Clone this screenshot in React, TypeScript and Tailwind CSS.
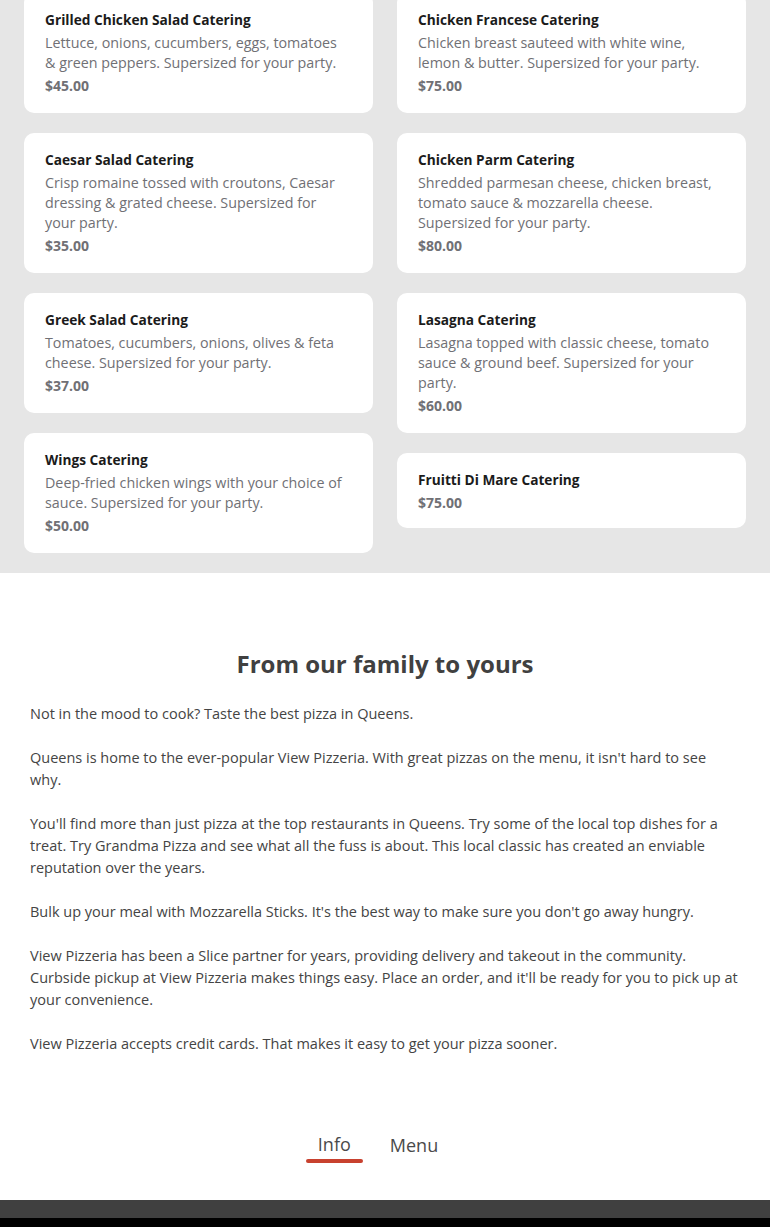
const left = [
  {
    name: "Grilled Chicken Salad Catering",
    description: "Lettuce, onions, cucumbers, eggs, tomatoes & green peppers. Supersized for your party.",
    price: "$45.00",
  },
  {
    name: "Caesar Salad Catering",
    description: "Crisp romaine tossed with croutons, Caesar dressing & grated cheese. Supersized for your party.",
    price: "$35.00",
  },
  {
    name: "Greek Salad Catering",
    description: "Tomatoes, cucumbers, onions, olives & feta cheese. Supersized for your party.",
    price: "$37.00",
  },
  {
    name: "Wings Catering",
    description: "Deep-fried chicken wings with your choice of sauce. Supersized for your party.",
    price: "$50.00",
  },
];

const right = [
  {
    name: "Chicken Francese Catering",
    description: "Chicken breast sauteed with white wine, lemon & butter. Supersized for your party.",
    price: "$75.00",
  },
  {
    name: "Chicken Parm Catering",
    description: "Shredded parmesan cheese, chicken breast, tomato sauce & mozzarella cheese. Supersized for your party.",
    price: "$80.00",
  },
  {
    name: "Lasagna Catering",
    description: "Lasagna topped with classic cheese, tomato sauce & ground beef. Supersized for your party.",
    price: "$60.00",
  },
  {
    name: "Fruitti Di Mare Catering",
    description: "",
    price: "$75.00",
  },
];

const paragraphs = [
  "Not in the mood to cook? Taste the best pizza in Queens.",
  "Queens is home to the ever-popular View Pizzeria. With great pizzas on the menu, it isn't hard to see why.",
  "You'll find more than just pizza at the top restaurants in Queens. Try some of the local top dishes for a treat. Try Grandma Pizza and see what all the fuss is about. This local classic has created an enviable reputation over the years.",
  "Bulk up your meal with Mozzarella Sticks. It's the best way to make sure you don't go away hungry.",
  "View Pizzeria has been a Slice partner for years, providing delivery and takeout in the community. Curbside pickup at View Pizzeria makes things easy. Place an order, and it'll be ready for you to pick up at your convenience.",
  "View Pizzeria accepts credit cards. That makes it easy to get your pizza sooner.",
];

type Item = { name: string; description: string; price: string };

function Card({ item }: { item: Item }) {
  return (
    <div className={`bg-white rounded-[10px] pl-[21px] pr-[28px] pt-[17px] ${item.description ? "pb-[17px]" : "pb-[15px]"}`}>
      <h3 className="text-[13.7px] leading-5 font-bold text-[#1b1b1b]">{item.name}</h3>
      {item.description && (
        <p className="mt-[3px] text-[14.3px] leading-5 text-[#707075]">{item.description}</p>
      )}
      <p className="mt-[3px] text-[14px] leading-5 font-bold text-[#707075]">{item.price}</p>
    </div>
  );
}

export default function App() {
  return (
    <div className="w-[770px] h-[1227px] overflow-hidden bg-white" style={{ fontFamily: '"Open Sans", sans-serif' }}>
      {/* catering items */}
      <section className="bg-[#e6e6e6] px-6 pb-5">
        <div className="-mt-[7px] grid grid-cols-2 gap-6 items-start">
          <div className="flex flex-col gap-5">
            {left.map((item) => (
              <Card key={item.name} item={item} />
            ))}
          </div>
          <div className="flex flex-col gap-5">
            {right.map((item) => (
              <Card key={item.name} item={item} />
            ))}
          </div>
        </div>
      </section>

      {/* about */}
      <section className="pt-[75px] px-[30px]">
        <h2 className="text-center text-[24px] leading-8 font-bold text-[#404040]">From our family to yours</h2>
        <div className="mt-[23px] flex flex-col gap-[22px] text-[14.5px] leading-[22px] text-[#444]">
          {paragraphs.map((p, i) => (
            <p key={i}>{p}</p>
          ))}
        </div>
      </section>

      {/* tabs */}
      <nav className="mt-[77px] pr-[26px] flex justify-center gap-[3px] text-[18px] leading-6 text-[#4a4a4a]">
        <div className="flex flex-col items-center px-3">
          <span>Info</span>
          <span className="mt-[3px] h-1 w-[57px] rounded-full bg-[#c8412f]" />
        </div>
        <div className="px-3">
          <span className="relative top-[1px]">Menu</span>
        </div>
      </nav>

      {/* footer */}
      <footer className="mt-[37px]">
        <div className="h-[18px] bg-[#404040]" />
        <div className="h-[40px] bg-black" />
      </footer>
    </div>
  );
}
